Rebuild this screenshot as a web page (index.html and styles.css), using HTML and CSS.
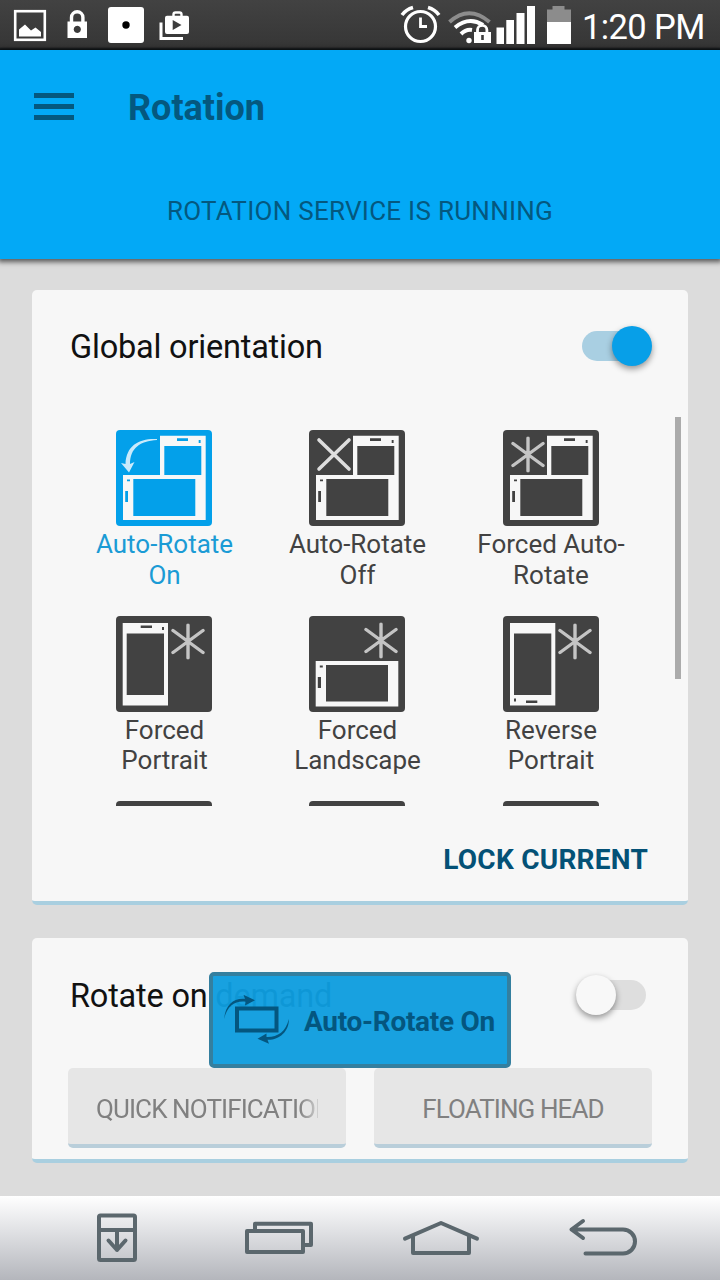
FILE: index.html
```html
<!DOCTYPE html>
<html lang="en">
<head>
  <meta charset="UTF-8">
  <meta name="viewport" content="width=device-width, initial-scale=1.0">
  <title>Rotation</title>
  <link rel="stylesheet" href="styles.css">
</head>
<body>
  <svg class="defs" width="0" height="0">
    <symbol id="star" viewBox="0 0 34 36">
      <path d="M17 1.500V34.500M2 7L32 29M32 7L2 29" fill="none" stroke="#c4c4c4" stroke-width="3.400" stroke-linecap="round"/>
    </symbol>
    <!-- phones are punched with currentColor so they follow the tile colour -->
    <symbol id="both" viewBox="0 0 96 96">
      <path fill="#f7f7f7" d="M44 5.700H89.700V90H7V45H44z"/>
      <path fill="currentColor" d="M48.300 16H85.300V45H48.300zM61 8.300H72V11H61zM82.700 10H84.600V13H82.700zM17.300 49H79.300V86H17.300zM9.200 61H12V72H9.200zM11 49.500H14V51.300H11z"/>
    </symbol>
    <symbol id="portrait" viewBox="0 0 96 96">
      <path fill="#f7f7f7" d="M6.700 7H52V89.500H6.700z"/>
      <path fill="currentColor" d="M10.700 17.500H48V79H10.700zM24.700 9.500H36V12H24.700zM46 11H48V14H46z"/>
    </symbol>
    <symbol id="landscape" viewBox="0 0 96 96">
      <path fill="#f7f7f7" d="M6.700 45H89.300V90.500H6.700z"/>
      <path fill="currentColor" d="M17 49H79V85.500H17zM8.800 61H12V72H8.800zM10.800 49.500H13.800V51.500H10.800z"/>
    </symbol>
  </svg>

  <div class="statusbar">
    <div class="notifications">
      <svg width="200" height="50" viewBox="0 0 200 50">
        <rect x="15.200" y="11.200" width="29.600" height="28.600" fill="none" stroke="#fff" stroke-width="2.600"/>
        <path fill="#fff" d="M19 36.500V29.500L25 24.500L31 30.500L35.500 27.500L41 32V36.500z"/>
        <path d="M71.500 23V17.500a5.700 5.700 0 0 1 11.400 0V23" fill="none" stroke="#fff" stroke-width="3.400"/>
        <path fill="#fff" fill-rule="evenodd" d="M67.500 21.500H87V38H67.500zM77.300 25.800a3.600 3.600 0 1 0 .01 0z"/>
        <rect x="108" y="7" width="36" height="36" rx="3" fill="#fff"/>
        <circle cx="126" cy="25" r="3.700" fill="#000"/>
        <path d="M161 22.500V38.500H183" fill="none" stroke="#fff" stroke-width="3"/>
        <path d="M173.500 17V14.500q0-2 2-2h4q2 0 2 2V17" fill="none" stroke="#fff" stroke-width="2.400"/>
        <path fill="#fff" fill-rule="evenodd" d="M167 15.800H187q2 0 2 2V32q0 2-2 2H167q-2 0-2-2V17.800q0-2 2-2zM172.700 20V30L181.500 25z"/>
      </svg>
    </div>
    <div class="system">
      <svg width="180" height="50" viewBox="400 0 180 50">
        <g fill="none" stroke="#fff">
          <circle cx="420.500" cy="26.500" r="15" stroke-width="3.200"/>
          <path d="M420.500 17.500V26.500H427" stroke-width="2.800"/>
          <path d="M402 15Q406 9.500 413 7.500M439 15Q435 9.500 428 7.500" stroke-width="3.600"/>
          <path d="M449.500 22Q469 4.500 489.500 22" stroke="#8c8c8c" stroke-width="4"/>
          <path d="M455 27.500Q469 16 483 25M461 34Q466 29 472 30" stroke-width="4"/>
        </g>
        <circle cx="469" cy="40.500" r="2.700" fill="#fff"/>
        <path d="M477.500 33V30a4.700 4.700 0 0 1 9.400 0V33" fill="none" stroke="#fff" stroke-width="2.800"/>
        <path fill="#fff" d="M474 32H491V43H474zM496.500 27.500H504V44H496.500zM506.300 20H514V44H506.300zM516.500 13H524.500V44H516.500zM527 6H535V44H527z"/>
        <path d="M482.500 35V40" stroke="#3c3c3c" stroke-width="2.600"/>
        <path fill="#8c8c8c" d="M547 9.500H552.500V6H564.500V9.500H571V23H547z"/>
        <path fill="#fff" d="M547 22H571V44H547z"/>
      </svg>
      <span class="clock">1:20 PM</span>
    </div>
  </div>

  <header>
    <div class="toolbar">
      <div class="menu"><i></i><i></i><i></i></div>
      <h1>Rotation</h1>
    </div>
    <p class="service">ROTATION SERVICE IS RUNNING</p>
  </header>

  <main>
    <section class="card orientation">
      <div class="card-head">
        <h2>Global orientation</h2>
        <div class="switch on"></div>
      </div>
      <div class="modes">
        <div class="mode active">
          <svg class="tile" viewBox="0 0 96 96">
            <use href="#both"/>
            <path fill="#c9eafb" d="M41 9C24 8 10 15 9.500 34L5 33L13 42.500L18.500 32L14 34C14 18 24 11 41 10z"/>
          </svg>
          <span>Auto-Rotate<br>On</span>
        </div>
        <div class="mode">
          <svg class="tile" viewBox="0 0 96 96">
            <use href="#both"/>
            <path d="M10 10L40 39M40 10L10 39" stroke="#dedede" stroke-width="3.600" stroke-linecap="round"/>
          </svg>
          <span>Auto-Rotate<br>Off</span>
        </div>
        <div class="mode">
          <svg class="tile" viewBox="0 0 96 96"><use href="#both"/><use href="#star" x="8" y="6.500" width="34" height="36"/></svg>
          <span>Forced Auto-<br>Rotate</span>
        </div>
        <div class="mode">
          <svg class="tile" viewBox="0 0 96 96"><use href="#portrait"/><use href="#star" x="55" y="7.500" width="34" height="36"/></svg>
          <span>Forced<br>Portrait</span>
        </div>
        <div class="mode">
          <svg class="tile" viewBox="0 0 96 96"><use href="#landscape"/><use href="#star" x="55" y="6.500" width="34" height="36"/></svg>
          <span>Forced<br>Landscape</span>
        </div>
        <div class="mode">
          <svg class="tile" viewBox="0 0 96 96"><use href="#portrait" transform="rotate(180 29.500 48.200)"/><use href="#star" x="55" y="7.500" width="34" height="36"/></svg>
          <span>Reverse<br>Portrait</span>
        </div>
        <div class="mode"><svg class="tile" viewBox="0 0 96 96"></svg></div>
        <div class="mode"><svg class="tile" viewBox="0 0 96 96"></svg></div>
        <div class="mode"><svg class="tile" viewBox="0 0 96 96"></svg></div>
        <div class="scrollbar"></div>
      </div>
      <div class="lock">LOCK CURRENT</div>
    </section>

    <section class="card demand">
      <div class="card-head">
        <h2>Rotate on demand</h2>
        <div class="switch"></div>
      </div>
      <div class="buttons">
        <div class="btn"><span class="fade">QUICK NOTIFICATION</span></div>
        <div class="btn"><span>FLOATING HEAD</span></div>
      </div>
      <div class="toast">
        <svg width="66" height="50" viewBox="0 0 66 50">
          <rect x="13" y="13.500" width="39.500" height="22" fill="none" stroke="#04567f" stroke-width="4"/>
          <path fill="#04567f" d="M.2 24C1 10 10 2.500 21 3.800L19.500-.2L31 5.200L21 10.500L21.500 6.700C11 5.500 3 11 .2 24z"/>
          <path fill="#04567f" d="M64.800 24C65.500 37 54 45.500 43.500 44.800L45 48.800L33.500 43.800L42.500 38.500L42.500 42C53 42.500 62 37 64.800 24z"/>
        </svg>
        <span>Auto-Rotate On</span>
      </div>
    </section>
  </main>

  <nav>
    <svg width="720" height="84" viewBox="0 1196 720 84" fill="none" stroke="#5b676d" stroke-width="4" stroke-linejoin="round">
      <rect x="99" y="1215.500" width="36" height="44.500" rx="1.500"/>
      <path d="M99 1230H135M117 1230V1250M108.500 1240.500L117 1250L125.500 1240.500" stroke-linecap="round"/>
      <path d="M247 1231H303V1252H247zM255 1231V1223.800H311V1245H303"/>
      <path d="M405 1238.700L441 1223L477 1238.700M413 1236V1253H469V1236" stroke-linecap="round"/>
      <path d="M583 1221L571.500 1229.500L583 1238M571.500 1229.500H623a12 12 0 0 1 0 24H585.500" stroke-linecap="round"/>
    </svg>
  </nav>
</body>
</html>
```
FILE: styles.css
```css
* { box-sizing: border-box; }
body { margin: 0; width: 720px; height: 1280px; overflow: hidden; display: flex; flex-direction: column; background: #dcdcdc; font-family: Roboto, sans-serif; color: #111; }
h1, h2, p { margin: 0; font-weight: normal; }
svg { display: block; flex: none; }
.defs { position: absolute; }

.statusbar { height: 50px; flex: none; display: flex; justify-content: space-between; background: linear-gradient(#424242, #363636 47px, #151a1e 49px); overflow: hidden; }
.system { display: flex; align-items: center; padding-right: 13px; }
.clock { color: #fff; font-size: 34.500px; letter-spacing: -.6px; line-height: 50px; width: 127px; padding: 3px 0 0 2px; white-space: nowrap; }

header { height: 209px; flex: none; background: #03a9f6; color: #04587f; box-shadow: 0 1px 5px 2px rgba(0, 0, 0, .6); }
.toolbar { display: flex; align-items: center; height: 112px; padding-left: 34px; gap: 54px; }
.menu { width: 40px; display: flex; flex-direction: column; gap: 6px; }
.menu i { height: 5px; background: #04587f; }
h1 { font-size: 36px; font-weight: bold; padding-top: 4px; }
.service { text-align: center; font-size: 26px; letter-spacing: .27px; line-height: 30px; margin-top: 34px; }

main { flex: 1; padding: 31px 32px 0; display: flex; flex-direction: column; gap: 33px; }
.card { background: #f7f7f7; border-bottom: 4px solid #a9cfe0; border-radius: 5px; flex: none; }
.orientation { height: 615px; }
.demand { height: 225px; position: relative; }
.card-head { display: flex; justify-content: space-between; align-items: center; height: 113px; padding: 0 36px 0 38px; }
h2 { font-size: 32.500px; letter-spacing: -.2px; }
.demand h2 { padding-top: 2px; }
.switch { position: relative; width: 70px; height: 30px; }
.switch.on { margin-top: -2px; }
.switch::before { content: ""; position: absolute; left: 0; right: 6px; top: 0; bottom: 0; border-radius: 15px; background: #a9cfe2; }
.switch::after { content: ""; position: absolute; right: 0; top: -5px; width: 40px; height: 40px; border-radius: 50%; background: #079fe8; box-shadow: 0 3px 6px rgba(0, 0, 0, .4); }
.switch:not(.on) { width: 76px; }
.switch:not(.on)::before { background: #dedede; }
.switch:not(.on)::after { right: auto; left: 0; background: #f8f8f8; }

.modes { position: relative; height: 403px; margin: 0 6px 0 36px; padding-top: 27px; overflow: hidden; display: grid; grid-template-columns: repeat(3, 193px); grid-auto-rows: 185.500px; }
.mode { display: flex; flex-direction: column; align-items: center; color: #424242; font-size: 26px; line-height: 30.500px; text-align: center; }
.mode.active { color: #03a0ea; }
.mode span { margin-top: 3px; }
.active span { color: #1b9bd5; }
.tile { width: 96px; height: 96px; margin-left: -1px; background: currentColor; border-radius: 4px; }
.mode:nth-child(3n) .tile { margin-left: 0; }
.mode:nth-child(3n) span { margin-left: 1px; }
.scrollbar { position: absolute; right: 1px; top: 14px; width: 6px; height: 262px; background: #ababab; }
.lock { height: 95px; line-height: 108px; text-align: right; padding-right: 40px; font-size: 28px; letter-spacing: .25px; font-weight: bold; color: #045176; }

.buttons { display: flex; gap: 28px; padding: 0 36px; margin-top: 17px; }
.btn { flex: 1; height: 80px; padding: 0 28px; background: #e6e6e6; border-bottom: 4px solid #b9ceda; border-radius: 5px; text-align: center; line-height: 82px; font-size: 26px; letter-spacing: -.9px; color: #808080; overflow: hidden; }
.btn span { display: block; white-space: nowrap; overflow: hidden; }
.btn .fade { text-align: left; -webkit-mask-image: linear-gradient(to right, #000 203px, transparent 228px); mask-image: linear-gradient(to right, #000 203px, transparent 228px); }

/* floating message above the second card */
.toast { position: absolute; left: 177px; top: 34px; width: 302px; height: 96px; display: flex; align-items: center; padding-left: 11px; gap: 14px; background: rgba(15, 157, 223, .96); border: 4px solid #347f9f; border-radius: 5px; color: #04567f; font-size: 28px; letter-spacing: -.3px; font-weight: bold; white-space: nowrap; }
.toast span { padding-top: 2px; }

nav { height: 84px; flex: none; background: linear-gradient(#fff, #e0e1e4 42%, #b4b6bc); }
```
